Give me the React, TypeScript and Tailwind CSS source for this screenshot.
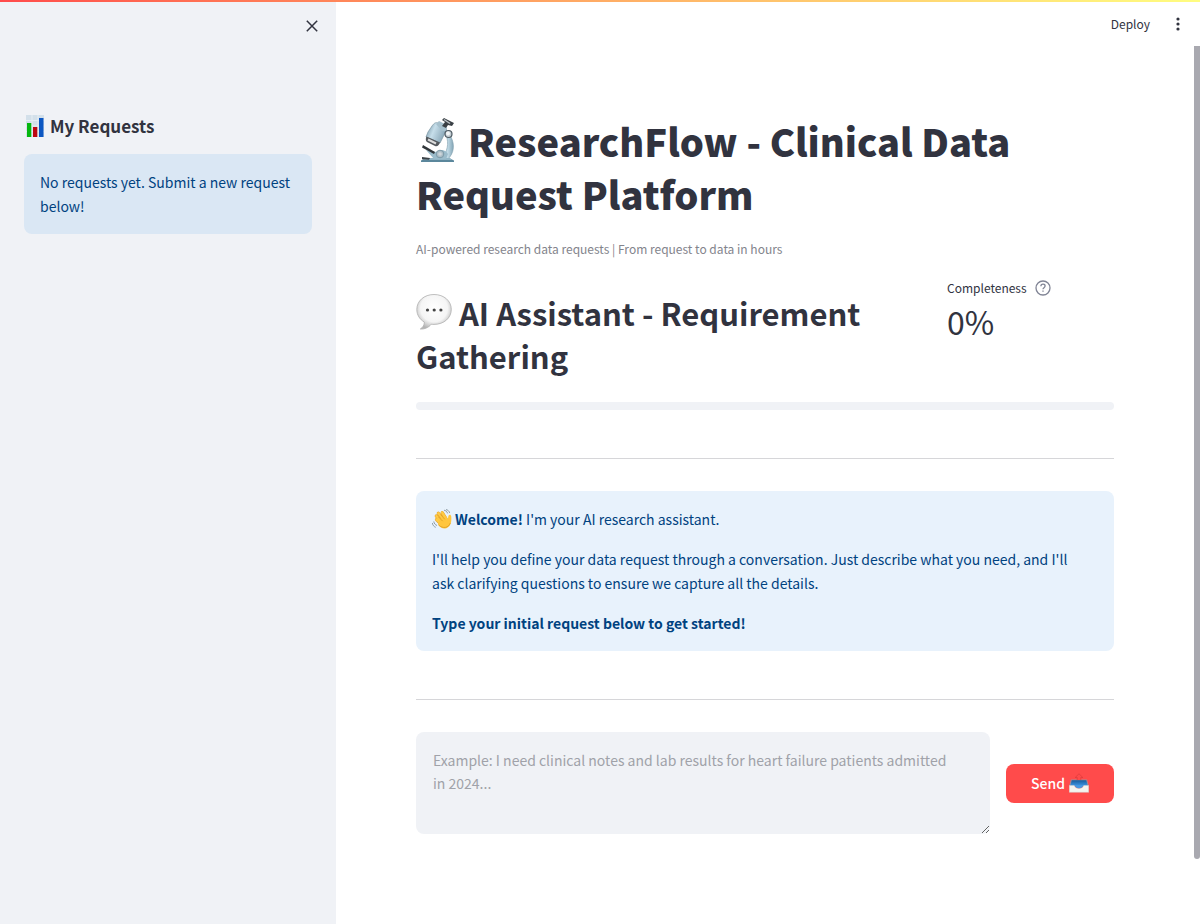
import { useState } from "react";

function BarChartEmoji() {
  return (
    <svg className="mr-1 h-[22px] w-[22px] shrink-0" viewBox="0 0 22 22" role="img" aria-label="Bar chart">
      <rect x="2" y="0" width="18" height="22" fill="#d3e0ea" />
      <path d="M2 5.500h18M2 11h18M2 16.500h18M8 0v22M14 0v22" stroke="#e6eef4" strokeWidth="1" />
      <rect x="3" y="8" width="4.300" height="14" fill="#05b70f" />
      <rect x="9" y="12" width="4.300" height="10" fill="#bd0712" />
      <rect x="15" y="3" width="4.500" height="19" fill="#0d57c2" />
    </svg>
  );
}

function MicroscopeEmoji() {
  return (
    <svg className="mr-2 inline-block h-[46px] w-[44px] align-[-6px]" viewBox="0 0 44 46" role="img" aria-label="Microscope">
      <defs>
        <linearGradient id="tube" x1="0" y1="0.300" x2="1" y2="0.700">
          <stop offset="0" stopColor="#7f9dad" />
          <stop offset="0.350" stopColor="#c6deea" />
          <stop offset="1" stopColor="#7d9cae" />
        </linearGradient>
        <linearGradient id="stand" x1="0" y1="0" x2="1" y2="0">
          <stop offset="0" stopColor="#8fb0c0" />
          <stop offset="0.600" stopColor="#c2dbe7" />
          <stop offset="1" stopColor="#83a5b6" />
        </linearGradient>
      </defs>
      <path d="M31 21l4-1c4 8 3 16-3 22h-9c7-4 10-12 8-21z" fill="url(#stand)" stroke="#7e9dac" strokeWidth=".6" />
      <path d="M5 43.500l4-2h25l4 2v1.500H5z" fill="#5b879c" />
      <path d="M10 41h24l2 2H7z" fill="#93b6c6" />
      <path d="M10 33l10 2c4-3 9-3 12 2l-2 5H18z" fill="#9bbccb" />
      <circle cx="24" cy="37" r="3.800" fill="#adbfc8" stroke="#718f9e" strokeWidth=".8" />
      <circle cx="24" cy="37" r="1.800" fill="#cfd6da" />
      <path d="M7 28l12 7-1 2L6 30.500z" fill="#30363a" />
      <path d="M6 40l8 1-1 1.800-7-.5z" fill="#3b4247" />
      <path d="M16 9c2-3 4-4 6-3l7 4c2 1 2 4 0 6l-5 10L10 20l2-5z" fill="url(#tube)" stroke="#7894a2" strokeWidth=".7" />
      <path d="M10.500 19.500L24 25.500c-1 3-3 4.500-5 3.500l-8-4c-1.500-1-1.500-3.500-.5-5.500z" fill="#54595e" />
      <path d="M12 22.500l8 4" stroke="#dddddd" strokeWidth="2" />
      <path d="M20 7l3-3 8 4-1 6-4 0z" fill="#a6c0cd" />
      <path d="M26 3l2-2 10 5-2 3-4-1-2 3-4-2 3-4z" fill="#3a4045" />
      <path d="M28 2.500l6 4" stroke="#b8bfc4" strokeWidth="1.500" />
      <circle cx="32.500" cy="17" r="3.500" fill="#c3cdd3" stroke="#4d5a63" strokeWidth="1.200" />
      <circle cx="32" cy="16.600" r="2" fill="#f2f5f6" />
    </svg>
  );
}

function SpeechEmoji() {
  return (
    <svg className="mr-[7px] inline-block h-[38px] w-[36px] align-[-5px]" viewBox="0 0 36 38" role="img" aria-label="Speech bubble">
      <defs>
        <radialGradient id="bubble" cx="0.500" cy="0.400" r="0.600">
          <stop offset="0" stopColor="#ffffff" />
          <stop offset="0.650" stopColor="#f5f5f5" />
          <stop offset="1" stopColor="#b4b4b4" />
        </radialGradient>
      </defs>
      <path d="M18 1.500C8 1.500.8 8 .8 16.500c0 5.500 3 10 7.500 12.500.3 3-1.500 5.500-4 7 4 .4 8.500-1.500 11-4.800 1 .2 1.800.2 2.700.2 10 0 17.300-6.500 17.300-15S28 1.500 18 1.500z" fill="url(#bubble)" stroke="#b0b0b0" strokeWidth=".8" />
      <g fill="#434343"><circle cx="11.500" cy="17" r="1.600" /><circle cx="18.200" cy="17" r="1.600" /><circle cx="24.900" cy="17" r="1.600" /></g>
    </svg>
  );
}

function WaveEmoji() {
  return (
    <svg className="mr-[3px] inline-block h-5 w-5 align-[-4px]" viewBox="0 0 20 20" role="img" aria-label="Waving hand">
      <g fill="none" stroke="#e5a02a" strokeWidth="3.200" strokeLinecap="round">
        <path d="M4.500 10.500l5 5M4.300 7l6 6M6.300 4.300l6 7M10.200 3.600l4 6.500" />
      </g>
      <g fill="none" stroke="#ffcb45" strokeWidth="2.400" strokeLinecap="round">
        <path d="M4.500 10.500l5 5M4.300 7l6 6M6.300 4.300l6 7M10.200 3.600l4 6.500" />
      </g>
      <path d="M8 10l6-3 2 3.500c0-2 .2-4.500 1.700-4.700 1.600-.2 1.800 2.400 1.600 5.200-.2 4.500-2.300 8-6.300 8.500-2.600.3-5-1.300-7-4z" fill="#ffc63e" />
      <path d="M6.500 8l4.200 4.200M8.500 5.500l4.300 4.800M6.500 16c4.500 4 10 3 11.800-2" fill="none" stroke="#d7951e" strokeWidth=".7" />
      <path d="M12 1.200c1.700.2 3 1.400 3.600 3.200M14 .6c1.800.2 3.200 1.600 3.700 3.300M1.800 12.500c.3 2 1.400 3.300 3.200 4M.3 14c.3 2.100 1.600 3.600 3.400 4.300" fill="none" stroke="#8b99a3" strokeWidth="1" />
    </svg>
  );
}

function OutboxEmoji() {
  return (
    <svg className="h-5 w-5 shrink-0" viewBox="0 0 20 20" role="img" aria-label="Outbox tray">
      <defs>
        <linearGradient id="tray" x1="0" y1="0" x2="0" y2="1">
          <stop offset="0" stopColor="#175d9f" />
          <stop offset="1" stopColor="#4297e3" />
        </linearGradient>
      </defs>
      <path d="M2 6.500h16l1.800 6.500H.2z" fill="#9f8f99" />
      <path d="M2.700 7.300h14.600l1.500 5.700H1.200z" fill="url(#tray)" />
      <path d="M.3 12.500h5c.7 2 2.200 3 4.700 3s4-1 4.700-3h5v6.800H.3z" fill="#f4f4ef" stroke="#cfcfcc" strokeWidth=".5" />
      <path d="M5.500 12.300h9c-.7 2-2.200 3-4.500 3s-3.800-1-4.500-3z" fill="#4499e4" />
      <path d="M8.200 7V4.500h-2L10 .8l3.800 3.700h-2V7" fill="#ff4b4b" stroke="#d53a3b" strokeWidth=".6" />
    </svg>
  );
}

function Sidebar() {
  return (
    <aside className="flex w-[336px] shrink-0 flex-col bg-[#f0f2f6] px-6">
      <div className="flex h-[114px] items-start justify-end pt-4">
        <button type="button" aria-label="Close sidebar" className="-mr-2.5 flex h-5 w-5 items-center justify-center">
          <svg className="h-5 w-5" viewBox="0 0 20 20" fill="none" stroke="#31333f" strokeWidth="1.500">
            <path d="M4.800 4.800l10.400 10.400M15.200 4.800L4.800 15.200" />
          </svg>
        </button>
      </div>
      <h2 className="flex h-6 items-center text-[17px] leading-6 font-bold">
        <BarChartEmoji />
        My Requests
      </h2>
      <div className="mt-4 rounded-lg bg-[#dae7f4] p-4 text-[#004280]">
        No requests yet. Submit a new request below!
      </div>
    </aside>
  );
}

function Toolbar() {
  return (
    <header className="flex h-12 items-center justify-end gap-[18px] pr-1.5 text-[12px]">
      <button type="button">Deploy</button>
      <button type="button" aria-label="Main menu" className="flex h-5 w-5 items-center justify-center">
        <svg className="h-4 w-4" viewBox="0 0 16 16" fill="#31333f">
          <circle cx="8" cy="3" r="1.600" /><circle cx="8" cy="8" r="1.600" /><circle cx="8" cy="13" r="1.600" />
        </svg>
      </button>
    </header>
  );
}

export default function App() {
  const [message, setMessage] = useState("");
  return (
    <div className="relative flex min-h-screen bg-white font-['Noto_Sans_CJK_SC','Noto_Sans',sans-serif] text-[14px] leading-6 text-[#31333f]">
      <div className="absolute inset-x-0 top-0 h-0.5 bg-linear-to-r from-[#ff4b4b] to-[#fffd80]" />
      <Sidebar />
      <div className="min-w-0 flex-1">
        <Toolbar />
        <main className="px-20 pt-[66px] pb-10">
          <h1 className="text-[38px] leading-[53px] font-black">
            <MicroscopeEmoji />
            ResearchFlow - Clinical Data Request Platform
          </h1>
          <p className="mt-[18px] text-[12px] leading-[22px] text-[#83848c]">
            AI-powered research data requests | From request to data in hours
          </p>
          <div className="mt-4 flex gap-4">
            <h2 className="min-w-0 flex-1 pt-[15px] pb-px text-[31px] leading-[43px] font-bold">
              <SpeechEmoji />
              AI Assistant - Requirement Gathering
            </h2>
            <div className="w-[167px]">
              <div className="flex h-6 items-center gap-2 text-[12px]">
                Completeness
                <button type="button" aria-label="Help" className="flex">
                  <svg className="h-4 w-4" viewBox="0 0 16 16" fill="none" stroke="#808495" strokeWidth="1.300">
                    <circle cx="8" cy="8" r="7" />
                    <path d="M5.900 6.200c0-1.300.9-2 2.100-2s2.100.7 2.100 1.800c0 1.600-2.100 1.700-2.100 3.200" />
                    <path d="M8 10.500v1.300" />
                  </svg>
                </button>
              </div>
              <div className="text-[32px] leading-[42px]">0%</div>
            </div>
          </div>
          <div role="progressbar" aria-label="Completeness" aria-valuenow={0} className="mt-6 h-2 rounded-full bg-[#f0f2f6]" />
          <hr className="mt-12 border-[#d6d6d9]" />
          <section className="mt-8 flex flex-col gap-4 rounded-lg bg-[#e8f2fc] py-4 pr-7 pl-4 text-[#004280]">
            <p>
              <WaveEmoji />
              <strong className="font-bold">Welcome!</strong> I'm your AI research assistant.
            </p>
            <p>
              I'll help you define your data request through a conversation. Just describe what you need, and I'll ask
              clarifying questions to ensure we capture all the details.
            </p>
            <p className="font-bold">Type your initial request below to get started!</p>
          </section>
          <hr className="mt-12 border-[#d6d6d9]" />
          <form className="mt-8 flex items-center gap-4" onSubmit={(event) => event.preventDefault()}>
            <textarea
              aria-label="Your message"
              value={message}
              onChange={(event) => setMessage(event.target.value)}
              placeholder="Example: I need clinical notes and lab results for heart failure patients admitted in 2024..."
              className="block h-[102px] min-w-0 flex-1 resize-y rounded-lg bg-[#f0f2f6] py-[17px] pr-8 pl-[17px] leading-[23px] outline-none placeholder:text-[#a0a2a9]"
            />
            <button
              type="submit"
              className="flex h-[39px] w-[108px] items-center justify-center gap-1 rounded-lg bg-[#ff4b4b] font-medium text-white"
            >
              Send
              <OutboxEmoji />
            </button>
          </form>
        </main>
      </div>
      <div className="w-1.5 shrink-0 pt-[46px]" aria-hidden="true">
        <div className="h-[813px] rounded-b-full bg-[#a9a9b0]" />
      </div>
    </div>
  );
}
